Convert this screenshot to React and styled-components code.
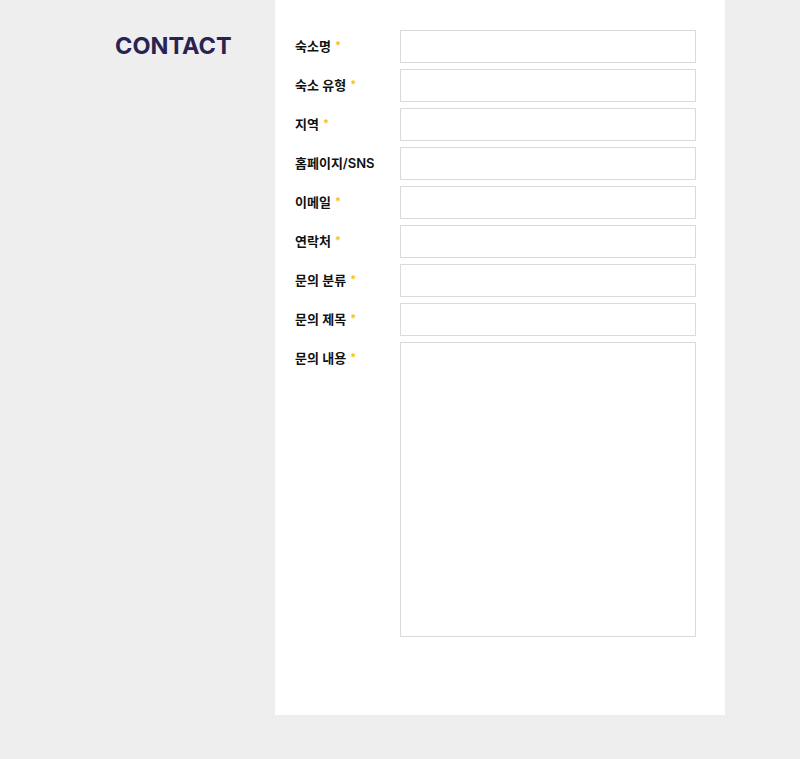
import React from 'react'
import styled, { createGlobalStyle } from 'styled-components'

const GlobalStyle = createGlobalStyle`
    html, body {
        margin: 0;
        padding: 0;
        background: #eeeeee;
    }
    body {
        font-family: Inter, "Noto Sans CJK KR", sans-serif;
    }
`

const Page = styled.div`
    display: flex;
    align-items: flex-start;
    min-height: 759px;
    padding-left: 115px;
    box-sizing: border-box;
`

const Side = styled.div`
    width: 160px;
    padding-top: 31px;
`

const Title = styled.h1`
    margin: 0;
    font-size: 23.5px;
    line-height: 29px;
    font-weight: 700;
    letter-spacing: 0;
    color: #2a2252;
`

const Panel = styled.div`
    width: 450px;
    height: 715px;
    background: #ffffff;
    padding: 30px 29px 0 20px;
    box-sizing: border-box;
`

const Form = styled.form`
    display: flex;
    flex-direction: column;
    gap: 6px;
`

const Row = styled.div`
    display: flex;
    align-items: flex-start;
`

const Label = styled.label`
    width: 105px;
    flex-shrink: 0;
    font-size: 13px;
    line-height: 33px;
    font-weight: 600;
    color: #111111;
    font-family: Inter, "Noto Sans CJK KR", sans-serif;
`

const Required = styled.span`
    color: #f5c400;
    font-size: 11px;
    margin-left: 4px;
    vertical-align: top;
    position: relative;
    top: -1px;
`

const Input = styled.input`
    flex: 1;
    height: 33px;
    margin: 0;
    padding: 0 8px;
    border: 1px solid #dadada;
    border-radius: 0;
    background: #ffffff;
    box-sizing: border-box;
    outline: none;
    font-family: inherit;
`

const TextArea = styled.textarea`
    flex: 1;
    height: 295px;
    margin: 0;
    padding: 8px;
    border: 1px solid #dadada;
    border-radius: 0;
    background: #ffffff;
    box-sizing: border-box;
    outline: none;
    resize: none;
    font-family: inherit;
    display: block;
`

const fields = [
    { label: '숙소명', required: true },
    { label: '숙소 유형', required: true },
    { label: '지역', required: true },
    { label: '홈페이지/SNS', required: false },
    { label: '이메일', required: true },
    { label: '연락처', required: true },
    { label: '문의 분류', required: true },
    { label: '문의 제목', required: true },
]

const App = () => {
    return (
        <>
            <GlobalStyle />
            <Page>
                <Side>
                    <Title>CONTACT</Title>
                </Side>
                <Panel>
                    <Form>
                        {fields.map((f) => (
                            <Row key={f.label}>
                                <Label>
                                    {f.label}
                                    {f.required && <Required>*</Required>}
                                </Label>
                                <Input type="text" />
                            </Row>
                        ))}
                        <Row>
                            <Label>
                                문의 내용
                                <Required>*</Required>
                            </Label>
                            <TextArea />
                        </Row>
                    </Form>
                </Panel>
            </Page>
        </>
    )
}

export default App
